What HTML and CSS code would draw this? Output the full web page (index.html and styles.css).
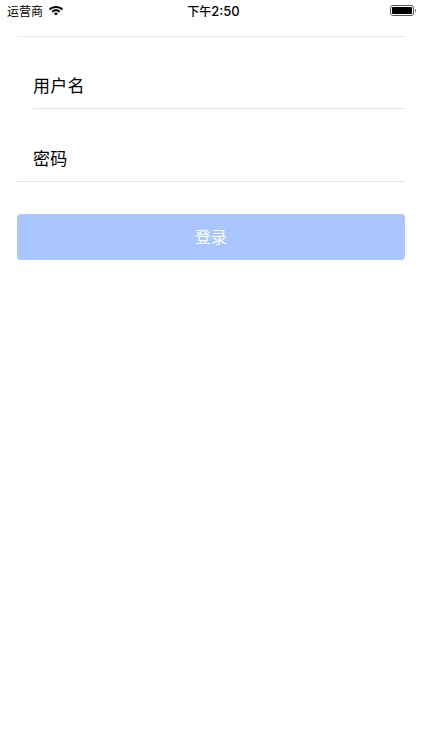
FILE: index.html
```html
<!DOCTYPE html>
<html lang="zh">
<head>
<meta charset="UTF-8">
<meta name="viewport" content="width=device-width, initial-scale=1.0">
<title>登录</title>
<link rel="stylesheet" href="styles.css">
</head>
<body>

<div class="status-bar">
    <div class="status-left">
        <span class="carrier">运营商</span>
        <svg class="wifi" width="14" height="10" viewBox="0 0 14 10">
            <path d="M7 0 C4.3 0 1.9 1 0 2.8 L1.3 4.2 C2.8 2.8 4.8 1.9 7 1.9 C9.2 1.9 11.2 2.8 12.7 4.2 L14 2.8 C12.1 1 9.7 0 7 0 Z" fill="#000"/>
            <path d="M7 3.3 C5.3 3.3 3.8 3.9 2.6 5 L3.9 6.4 C4.7 5.6 5.8 5.2 7 5.2 C8.2 5.2 9.3 5.6 10.1 6.4 L11.4 5 C10.2 3.9 8.7 3.3 7 3.3 Z" fill="#000"/>
            <path d="M7 6.4 C6.2 6.4 5.5 6.7 4.9 7.2 L7 9.6 L9.1 7.2 C8.5 6.7 7.8 6.4 7 6.4 Z" fill="#000"/>
        </svg>
    </div>
    <div class="clock">下午<span class="clock-time">2:50</span></div>
    <div class="battery">
        <div class="battery-body"><div class="battery-fill"></div></div>
        <div class="battery-tip"></div>
    </div>
</div>

<div class="top-line"></div>

<div class="field field-first">
    <div class="field-text">用户名</div>
</div>
<div class="field field-full">
    <div class="field-text">密码</div>
</div>

<button class="login-button">登录</button>

</body>
</html>
```

FILE: styles.css
```css
body {
    margin: 0;
    padding: 0;
    background-color: #fff;
    font-family: "Liberation Sans", "Noto Sans CJK SC", sans-serif;
    color: #000;
}
.status-bar {
    height: 20px;
    padding: 1px 6px 0 7px;
    display: flex;
    align-items: center;
    justify-content: space-between;
    box-sizing: border-box;
    font-size: 12px;
}
.status-left {
    width: 104px;
    display: flex;
    align-items: center;
    gap: 6px;
}
.carrier {
    font-size: 12px;
}
.clock {
    font-size: 12px;
    font-weight: 500;
    font-family: "Inter", "Noto Sans CJK SC", sans-serif;
}
.clock-time {
    font-size: 13px;
}
.battery {
    width: 100px;
    display: flex;
    justify-content: flex-end;
    align-items: center;
}
.battery-body {
    box-sizing: border-box;
    width: 24px;
    height: 11px;
    padding: 1px;
    border: 1px solid #555;
    border-radius: 3px;
}
.battery-fill {
    height: 100%;
    background-color: #000;
    border-radius: 1px;
}
.battery-tip {
    width: 1px;
    height: 3px;
    margin-left: 1px;
    background-color: #888;
}
.top-line {
    height: 1px;
    margin: 16px 17px 0 17px;
    background-color: #e8e8e8;
}
.field {
    box-sizing: border-box;
    height: 73px;
    margin: 0 17px 0 33px;
    border-bottom: 1px solid #e4e4e4;
    display: flex;
    align-items: flex-end;
}
.field-first {
    height: 72px;
}
.field-full {
    margin-left: 17px;
    padding-left: 16px;
}
.field-text {
    font-size: 17px;
    line-height: 24px;
    padding-bottom: 9px;
    letter-spacing: 0.3px;
}
.login-button {
    display: block;
    width: 388px;
    height: 46px;
    margin: 32px 17px 0 17px;
    padding: 0 0 2px 0;
    border: none;
    border-radius: 4px;
    background-color: #a9c6ff;
    color: #fff;
    font-family: inherit;
    font-size: 16px;
}
```
